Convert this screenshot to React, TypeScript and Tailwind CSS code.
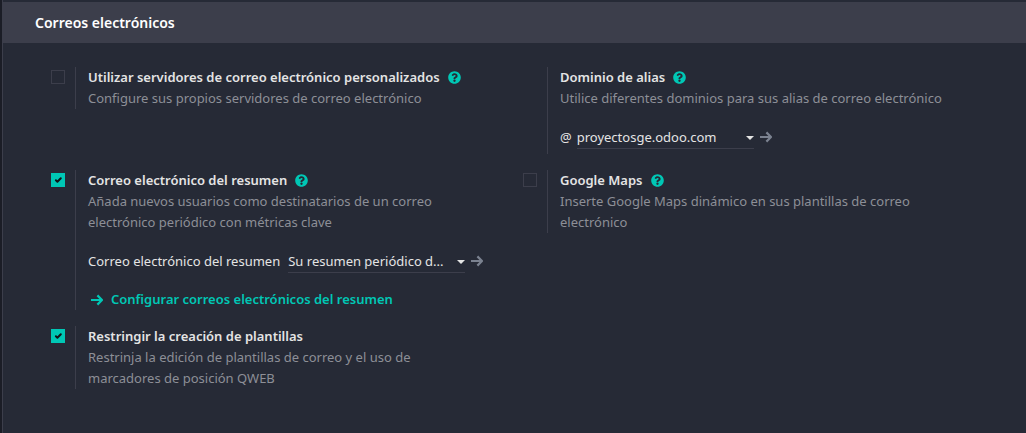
import { useId, useState, type ReactNode } from 'react';
import { FaQuestionCircle } from 'react-icons/fa';

function ArrowRight() {
  return (
    <svg viewBox="0 0 12 12" className="h-3 w-3 shrink-0" fill="none" stroke="currentColor" strokeWidth="2.2" aria-hidden="true">
      <path d="M0 6h10.8M6.4 1.4L11 6l-4.6 4.6" />
    </svg>
  );
}

function Checkbox({ id, initial }: { id: string; initial: boolean }) {
  const [checked, setChecked] = useState(initial);
  return (
    <span className="relative block h-3.5 w-3.5">
      <input
        id={id}
        type="checkbox"
        checked={checked}
        onChange={(e) => setChecked(e.target.checked)}
        className="block h-3.5 w-3.5 appearance-none border border-[#3c3e4b] checked:border-[#00c7b5] checked:bg-[#00c7b5]"
      />
      {checked && (
        <svg viewBox="0 0 14 14" className="pointer-events-none absolute inset-0 h-3.5 w-3.5" fill="none" stroke="#111318" strokeWidth="2" strokeLinecap="round" strokeLinejoin="round" aria-hidden="true">
          <path d="M4.9 7.3l1.5 1.4L9.8 5.2" />
        </svg>
      )}
    </span>
  );
}

type SettingProps = {
  title: string;
  description: string;
  checkbox?: boolean;
  help?: boolean;
  children?: ReactNode;
};

function Setting({ title, description, checkbox, help = false, children }: SettingProps) {
  const id = useId();
  return (
    <div className="flex items-start">
      <div className="w-6 shrink-0 pt-[3px]">
        {checkbox !== undefined && <Checkbox id={id} initial={checkbox} />}
      </div>
      <div className="min-w-0 flex-1 border-l border-[#3c3e4b] pl-3">
        <div className="flex items-center gap-2">
          {checkbox !== undefined ? (
            <label htmlFor={id} className="font-semibold text-[#e4e4e4]">{title}</label>
          ) : (
            <h3 className="font-semibold text-[#e4e4e4]">{title}</h3>
          )}
          {help && (
            <button type="button" aria-label="Ayuda" className="text-[#00c7b5]">
              <FaQuestionCircle size={13} />
            </button>
          )}
        </div>
        <p className="pr-6 text-[#8d8f97]">{description}</p>
        {children}
      </div>
    </div>
  );
}

function SelectField({ id, value }: { id: string; value: string }) {
  return (
    <div className="flex items-center gap-1.5">
      <div className="relative w-[177px]">
        <select id={id} className="block h-6 w-full appearance-none truncate border-b border-[#3c3e4b] bg-transparent pt-px pr-3 text-[#e4e4e4] outline-none">
          <option>{value}</option>
        </select>
        <svg viewBox="0 0 8 4" className="pointer-events-none absolute top-[11px] right-0 h-1 w-2" fill="#e4e4e4" aria-hidden="true">
          <path d="M0 0h8L4 4z" />
        </svg>
      </div>
      <button type="button" aria-label="Abrir" className="text-[#7b8290]">
        <ArrowRight />
      </button>
    </div>
  );
}

export default function App() {
  return (
    <main className="min-h-screen border-l-2 border-[#1b1d26] bg-[#262a36] font-['Noto_Sans','Open_Sans',sans-serif] text-[13px] leading-[21px] text-[#e4e4e4]">
      <section className="min-h-screen border-l border-[#3c3e4b] pt-0.5">
        <h2 className="bg-[#3c3e4b] px-8 py-2.5 text-sm leading-[21px] font-semibold text-white">Correos electrónicos</h2>
        <div className="grid grid-cols-2 gap-4 pt-6 pr-[47px] pl-12">
          <Setting
            checkbox={false}
            help
            title="Utilizar servidores de correo electrónico personalizados"
            description="Configure sus propios servidores de correo electrónico"
          />
          <Setting help title="Dominio de alias" description="Utilice diferentes dominios para sus alias de correo electrónico">
            <div className="mt-4 mb-[5px] flex items-center gap-[5px]">
              <label htmlFor="alias-domain">@</label>
              <SelectField id="alias-domain" value="proyectosge.odoo.com" />
            </div>
          </Setting>
          <Setting
            checkbox
            help
            title="Correo electrónico del resumen"
            description="Añada nuevos usuarios como destinatarios de un correo electrónico periódico con métricas clave"
          >
            <div className="mt-4 flex items-center gap-2">
              <label htmlFor="digest">Correo electrónico del resumen</label>
              <SelectField id="digest" value="Su resumen periódico d..." />
            </div>
            <a href="#resumen" className="mt-4 flex items-center gap-2 pl-[3px] font-semibold text-[#00c7b5]">
              <ArrowRight />
              Configurar correos electrónicos del resumen
            </a>
          </Setting>
          <Setting
            checkbox={false}
            help
            title="Google Maps"
            description="Inserte Google Maps dinámico en sus plantillas de correo electrónico"
          />
          <Setting
            checkbox
            title="Restringir la creación de plantillas"
            description="Restrinja la edición de plantillas de correo y el uso de marcadores de posición QWEB"
          />
        </div>
      </section>
    </main>
  );
}
